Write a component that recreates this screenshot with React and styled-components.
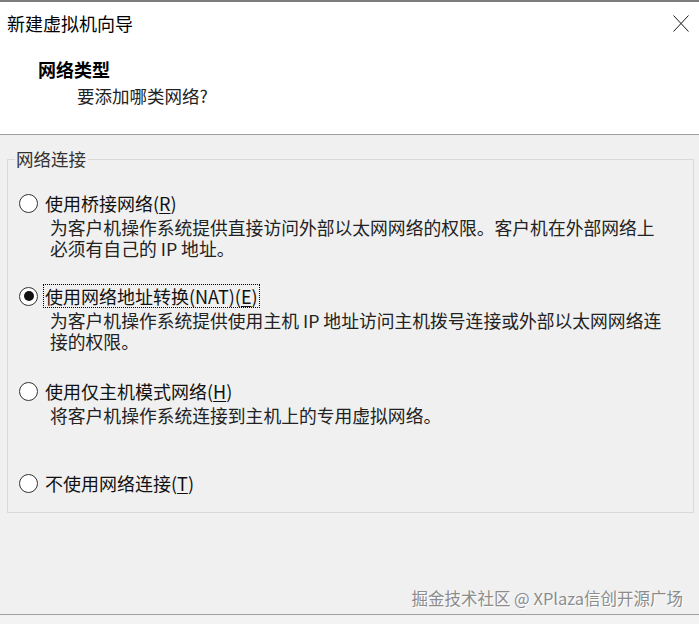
import React from "react";
import styled, { createGlobalStyle } from "styled-components";

const options = [
  {
    label: "使用桥接网络",
    key: "R",
    desc: "为客户机操作系统提供直接访问外部以太网网络的权限。客户机在外部网络上必须有自己的 IP 地址。",
  },
  {
    label: "使用网络地址转换(NAT)",
    key: "E",
    checked: true,
    desc: "为客户机操作系统提供使用主机 IP 地址访问主机拨号连接或外部以太网网络连接的权限。",
  },
  {
    label: "使用仅主机模式网络",
    key: "H",
    desc: "将客户机操作系统连接到主机上的专用虚拟网络。",
  },
  {
    label: "不使用网络连接",
    key: "T",
  },
];

function App() {
  return (
    <Window>
      <GlobalStyle />
      <Header>
        <TitleBar>
          <Title>新建虚拟机向导</Title>
          <CloseIcon width="16" height="17" viewBox="0 0 16 17">
            <path d="M0.5 0.5 L15.5 16.5 M15.5 0.5 L0.5 16.5" stroke="#1a1a1a" strokeWidth="1" fill="none" />
          </CloseIcon>
        </TitleBar>
        <Heading>网络类型</Heading>
        <SubHeading>要添加哪类网络?</SubHeading>
      </Header>
      <Body>
        <GroupBox>
          <Legend>网络连接</Legend>
          <OptionList>
            {options.map((opt) => (
              <Option key={opt.key}>
                <OptionRow>
                  <Radio $checked={opt.checked} />
                  <Label $focused={opt.checked}>
                    {opt.label}(<u>{opt.key}</u>)
                  </Label>
                </OptionRow>
                {opt.desc && <Desc>{opt.desc}</Desc>}
              </Option>
            ))}
          </OptionList>
        </GroupBox>
        <Footer>
          <Watermark>掘金技术社区 @ XPlaza信创开源广场</Watermark>
        </Footer>
      </Body>
      <BottomStrip />
    </Window>
  );
}

const GlobalStyle = createGlobalStyle`
  html, body {
    margin: 0;
    padding: 0;
    background: #f0f0f0;
  }
  * {
    box-sizing: border-box;
  }
`;

const Window = styled.div`
  width: 699px;
  height: 624px;
  display: flex;
  flex-direction: column;
  background: #f0f0f0;
  font-family: "Noto Sans CJK SC", "Liberation Sans", sans-serif;
  color: #111;
  overflow: hidden;
`;

const Header = styled.div`
  height: 135px;
  flex-shrink: 0;
  background: #fff;
  border-top: 2px solid #7d7d7d;
  border-bottom: 1px solid #a0a0a0;
  padding: 9px 10px 0 7px;
`;

const TitleBar = styled.div`
  display: flex;
  justify-content: space-between;
  align-items: flex-start;
`;

const Title = styled.div`
  font-size: 18px;
  line-height: 24px;
  color: #000;
`;

const CloseIcon = styled.svg`
  margin-top: 4px;
`;

const Heading = styled.div`
  margin: 23px 0 0 31px;
  font-size: 18px;
  line-height: 22px;
  font-weight: bold;
  color: #000;
`;

const SubHeading = styled.div`
  margin: 5px 0 0 70px;
  font-size: 17.5px;
  line-height: 22px;
  color: #222;
`;

const Body = styled.div`
  flex: 1;
  display: flex;
  flex-direction: column;
  padding: 13px 5px 0 7px;
`;

const GroupBox = styled.fieldset`
  margin: 0;
  padding: 22px 10px 18px 11px;
  border: 1px solid #d9d9d9;
  min-width: 0;
`;

const Legend = styled.legend`
  margin-left: -4px;
  padding: 0 2px 0 1px;
  font-size: 17.5px;
  line-height: 22px;
  color: #333;
`;

const OptionList = styled.div`
  display: grid;
  grid-template-rows: 93px 95px 92px auto;
`;

const Option = styled.div`
  display: flex;
  flex-direction: column;
`;

const OptionRow = styled.div`
  display: flex;
  align-items: center;
  height: 22px;
`;

const Radio = styled.span`
  position: relative;
  width: 19px;
  height: 19px;
  flex-shrink: 0;
  border-radius: 50%;
  border: 1px solid #333;
  background: #fff;
  &::after {
    content: "";
    display: ${(p) => (p.$checked ? "block" : "none")};
    position: absolute;
    left: 3.5px;
    top: 3.5px;
    width: 10px;
    height: 10px;
    border-radius: 50%;
    background: #111;
  }
`;

const Label = styled.span`
  margin-left: 5px;
  padding: 0 1px;
  font-size: 18px;
  line-height: 22px;
  color: #111;
  border: 1px dotted ${(p) => (p.$focused ? "#000" : "transparent")};
  u {
    text-underline-offset: 2px;
  }
`;

const Desc = styled.div`
  width: 618px;
  margin: 3px 0 0 31px;
  font-size: 17.8px;
  line-height: 21px;
  color: #222;
`;

const Footer = styled.div`
  flex: 1;
  display: flex;
  justify-content: flex-end;
  align-items: flex-end;
  padding: 0 16px 6px 0;
  margin-right: -5px;
  margin-left: -7px;
  border-bottom: 1px solid #a0a0a0;
`;

const Watermark = styled.div`
  font-size: 16.5px;
  line-height: 20px;
  color: #8c8c8c;
  text-shadow: 1px 1px 0 #fff;
`;

const BottomStrip = styled.div`
  height: 9px;
  flex-shrink: 0;
  background: #f3f3f3;
`;

export default App;
